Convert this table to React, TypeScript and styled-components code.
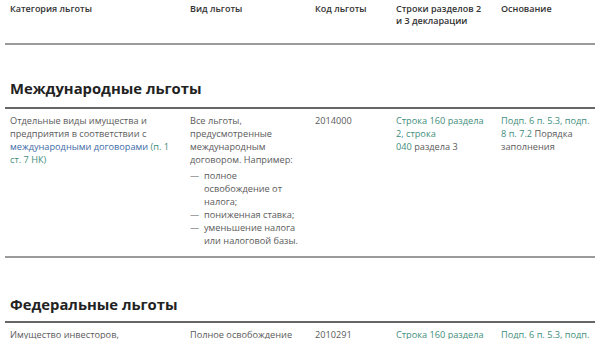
import React from "react";
import styled, { createGlobalStyle } from "styled-components";

const GlobalStyle = createGlobalStyle`
  body {
    margin: 0;
    background: #ffffff;
    font-family: "Open Sans", "Liberation Sans", sans-serif;
    color: #555;
  }
`;

const Page = styled.div`
  width: 600px;
  height: 339px;
  overflow: hidden;
  padding: 0 5px;
  box-sizing: border-box;
`;

const Row = styled.div`
  display: grid;
  grid-template-columns: 180px 125px 81px 105px 1fr;
  padding: 0 0 0 5px;
  border-bottom: 2px solid #9b9b9b;
`;

const HeadRow = styled(Row)`
  height: 45px;
  padding-top: 3px;
  box-sizing: border-box;
`;

const HeadCell = styled.div`
  font-size: 9px;
  line-height: 12px;
  font-weight: 600;
  color: #333;
  padding-right: 8px;
`;

const SectionTitle = styled.h2<{ $top: number; $bottom: number }>`
  margin: 0;
  padding: ${(p) => p.$top}px 0 ${(p) => p.$bottom}px 5px;
  font-size: 14.8px;
  line-height: 20px;
  font-weight: 700;
  color: #222;
  border-bottom: 2px solid #666;
`;

const BodyRow = styled(Row)`
  padding-top: 5px;
  padding-bottom: 9px;
`;

const Cell = styled.div<{ $pad?: number }>`
  font-size: 9.2px;
  line-height: 13px;
  color: #5a5a5a;
  padding-right: ${(p) => p.$pad ?? 10}px;
`;

const Blue = styled.span`
  color: #3c6aa6;
`;

const Green = styled.span`
  color: #3f8e7c;
`;

const Dashes = styled.ul`
  list-style: none;
  margin: 3px 0 0;
  padding: 0;
`;

const Dash = styled.li`
  display: grid;
  grid-template-columns: 14px 1fr;
  &::before {
    content: "—";
  }
`;

export default function App() {
  return (
    <Page>
      <GlobalStyle />
      <HeadRow>
        <HeadCell>Категория льготы</HeadCell>
        <HeadCell>Вид льготы</HeadCell>
        <HeadCell>Код льготы</HeadCell>
        <HeadCell>
          Строки разделов 2<br />и 3 декларации
        </HeadCell>
        <HeadCell>Основание</HeadCell>
      </HeadRow>

      <SectionTitle $top={33} $bottom={9}>
        Международные льготы
      </SectionTitle>
      <BodyRow>
        <Cell>
          Отдельные виды имущества и предприятия в соответствии с{" "}
          <Blue>международными договорами</Blue> <Green>(п. 1 ст. 7 НК)</Green>
        </Cell>
        <Cell $pad={14}>
          Все льготы, предусмотренные международным договором. Например:
          <Dashes>
            <Dash>полное освобождение от налога;</Dash>
            <Dash>пониженная ставка;</Dash>
            <Dash> уменьшение налога или налоговой базы.</Dash>
          </Dashes>
        </Cell>
        <Cell>2014000</Cell>
        <Cell>
          <Green>
            Строка 160 раздела
            <br />
            2, строка
            <br />
            040
          </Green>{" "}
          раздела 3
        </Cell>
        <Cell $pad={4}>
          <Green>Подп. 6 п. 5.3, подп. 8 п. 7.2</Green> Порядка заполнения
        </Cell>
      </BodyRow>

      <SectionTitle $top={36} $bottom={7}>
        Федеральные льготы
      </SectionTitle>
      <BodyRow>
        <Cell>Имущество инвесторов,</Cell>
        <Cell>Полное освобождение</Cell>
        <Cell>2010291</Cell>
        <Cell>
          <Green>Строка 160 раздела</Green>
        </Cell>
        <Cell $pad={4}>
          <Green>Подп. 6 п. 5.3, подп.</Green>
        </Cell>
      </BodyRow>
    </Page>
  );
}
